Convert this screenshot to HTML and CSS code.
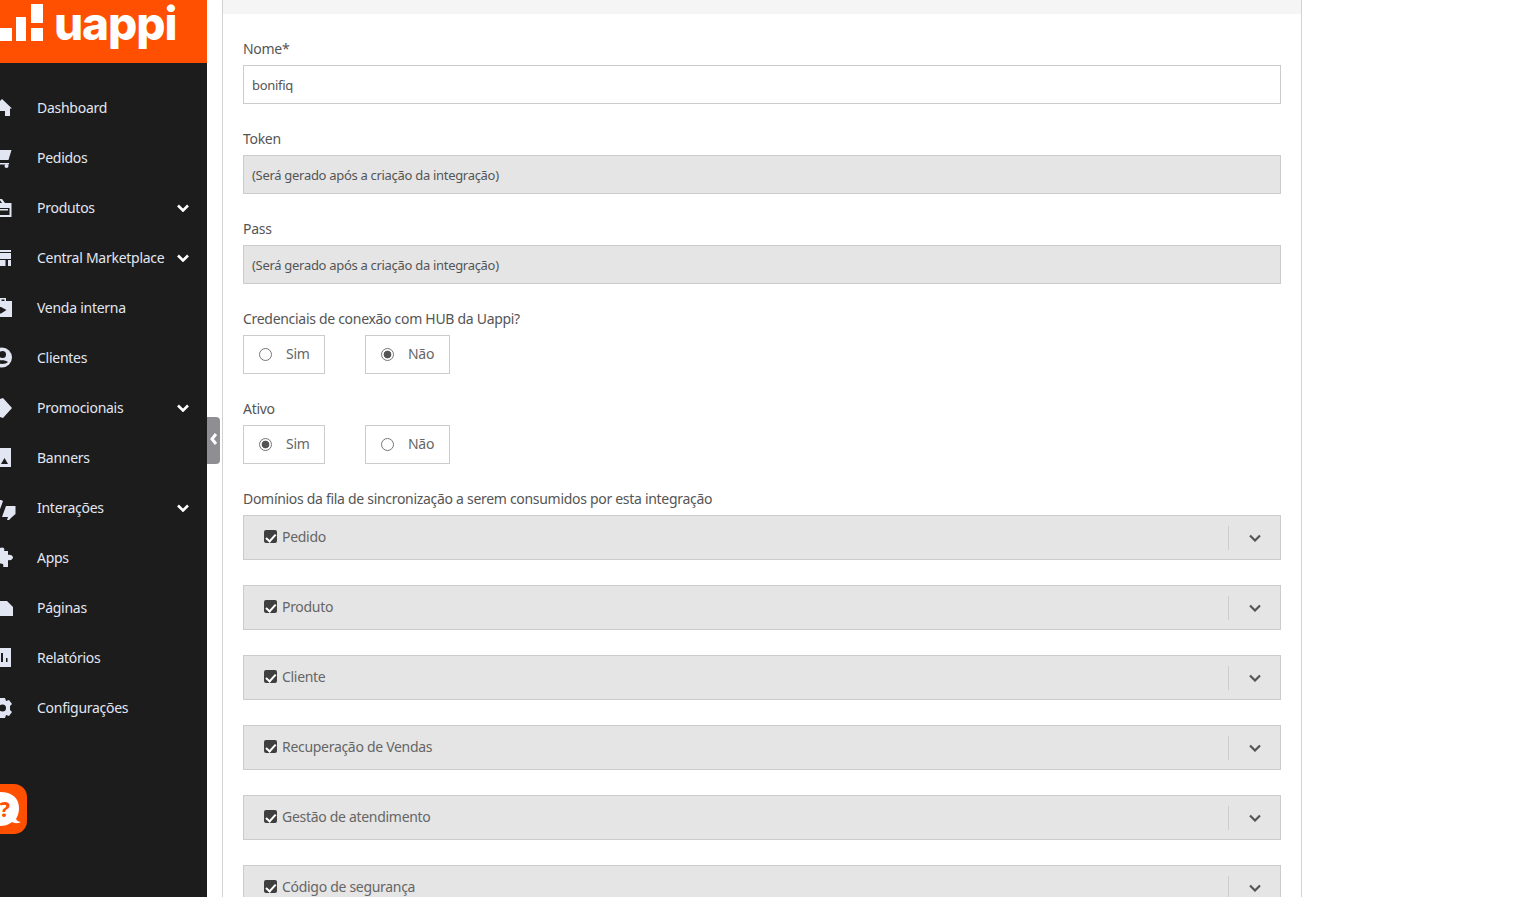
FILE: index.html
```html
<!DOCTYPE html>
<html lang="pt-BR">
<head>
<meta charset="utf-8">
<title>Integração</title>
<link rel="stylesheet" href="styles.css">
</head>
<body>
<div class="app">
  <aside class="sidebar">
    <div class="brand">
      <svg class="brand-mark" viewBox="0 0 44 63" width="44" height="63" aria-hidden="true"><rect x="0" y="28" width="12" height="13"/><rect x="16" y="17" width="10" height="24"/><rect x="31" y="4" width="12" height="19"/><rect x="31" y="28" width="12" height="13"/></svg>
      <span class="brand-name">uappi</span>
    </div>
    <nav class="nav">
      <a class="nav-item"><svg class="nav-icon" viewBox="-8 0 24 24"><path d="M2 3L12 12.500L10 12.500V20H5V15H0V20H-6V12.500H-8Z"/></svg><span class="nav-label">Dashboard</span></a>
      <a class="nav-item"><svg class="nav-icon" viewBox="-8 0 24 24"><path d="M-6 4H11.500L8.500 14H-6Z"/><path d="M-6 17H9V18.500H-6Z"/><circle cx="6.500" cy="20" r="2"/></svg><span class="nav-label">Pedidos</span></a>
      <a class="nav-item has-sub"><svg class="nav-icon" viewBox="-8 0 24 24"><path d="M-6 7H2L-1 3H2L5 7H11.500V21H-6ZM-4 12V19H9.500V12Z" fill-rule="evenodd"/><path d="M-2 13H8V14.500H-2Z"/></svg><span class="nav-label">Produtos</span><svg class="nav-caret" viewBox="0 0 12 8"><path d="M1 1.500L6 6.500L11 1.500"/></svg></a>
      <a class="nav-item has-sub"><svg class="nav-icon" viewBox="-8 0 24 24"><path d="M-6 4H11V6H-6Z"/><path d="M-6 7H11V13H-6Z"/><path d="M-6 14H5.500V20H-6Z"/><path d="M8 14H11V20H8Z"/></svg><span class="nav-label">Central Marketplace</span><svg class="nav-caret" viewBox="0 0 12 8"><path d="M1 1.500L6 6.500L11 1.500"/></svg></a>
      <a class="nav-item"><svg class="nav-icon" viewBox="-8 0 24 24"><path d="M-6 5H0V2H6V5H12V21H-6ZM1.500 5H4.500V3.500H1.500Z" fill-rule="evenodd"/><path class="cut" d="M-2 11H1L6.500 14L1 17.500H-2Z"/></svg><span class="nav-label">Venda interna</span></a>
      <a class="nav-item"><svg class="nav-icon" viewBox="-8 0 24 24"><circle cx="2" cy="11.500" r="10"/><circle class="cut" cx="2.500" cy="8.500" r="3.500"/><path class="cut" d="M-4 16C-1 13.500 5 13.500 8 16C6 18.500 -2 18.500 -4 16Z"/></svg><span class="nav-label">Clientes</span></a>
      <a class="nav-item has-sub"><svg class="nav-icon" viewBox="-8 0 24 24"><path d="M3 2L12 12L3 22L0 21H-8V3H0Z"/></svg><span class="nav-label">Promocionais</span><svg class="nav-caret" viewBox="0 0 12 8"><path d="M1 1.500L6 6.500L11 1.500"/></svg></a>
      <a class="nav-item"><svg class="nav-icon" viewBox="-8 0 24 24"><path d="M-6 2H11V21H-6Z"/><path class="cut" d="M1 18L4.500 12L8 18Z"/></svg><span class="nav-label">Banners</span></a>
      <a class="nav-item has-sub"><svg class="nav-icon" viewBox="-8 0 24 24"><path d="M-1 4H1L3 5L-1 16H-4Z"/><path d="M6 10H15.500V18L12 21L9 24H7L8 21H2Z"/></svg><span class="nav-label">Interações</span><svg class="nav-caret" viewBox="0 0 12 8"><path d="M1 1.500L6 6.500L11 1.500"/></svg></a>
      <a class="nav-item"><svg class="nav-icon" viewBox="-8 0 24 24"><path d="M-6 5H-1C-2 3 0 1.500 2 1.500S5 3 4 5H8V9C10 8 13 9.500 13 11.500S10 15 8 14V21H3C4 19 3 17.500 1 17.500S-3 19 -2 21H-6Z"/></svg><span class="nav-label">Apps</span></a>
      <a class="nav-item"><svg class="nav-icon" viewBox="-8 0 24 24"><path d="M-6 5H7L13 11V20H-6Z"/></svg><span class="nav-label">Páginas</span></a>
      <a class="nav-item"><svg class="nav-icon" viewBox="-8 0 24 24"><path d="M-6 2H11V21H-6Z"/><path class="cut" d="M1 7H3V16H1ZM6 12H7.500V16H6Z"/></svg><span class="nav-label">Relatórios</span></a>
      <a class="nav-item"><svg class="nav-icon" viewBox="-8 0 24 24"><path d="M0 2H5L6 5L9 4L12 8L10 10V14L12 16L9 20L6 19L5 22H0L-1 19L-4 20L-7 16L-5 14V10L-7 8L-4 4L-1 5Z"/><circle class="cut" cx="2.500" cy="12" r="3.500"/></svg><span class="nav-label">Configurações</span></a>
    </nav>
  </aside>
  <button class="collapse" type="button" aria-label="Recolher menu"><svg viewBox="0 0 8 12" width="8" height="12"><path d="M6 1L2 6L6 11"/></svg></button>
  <a class="help" aria-label="Ajuda"><svg viewBox="0 0 27 50" width="27" height="50"><path class="help-bubble" d="M0 8C12 8 19 14 19 24C19 30 17 33 16 35C17 37 19 38 21 38C17 40 14 39 12 38C8 41 4 42 0 42Z"/><text class="help-mark" x="4.500" y="33">?</text></svg></a>
  <main class="content">
    <section class="panel">
      <div class="panel-top"></div>
      <form class="panel-body">
        <div class="field"><label class="label">Nome*</label><input class="input" type="text" value="bonifiq"></div>
        <div class="field"><label class="label">Token</label><input class="input" type="text" disabled value="(Será gerado após a criação da integração)"></div>
        <div class="field"><label class="label">Pass</label><input class="input" type="text" disabled value="(Será gerado após a criação da integração)"></div>
        <div class="field"><span class="label">Credenciais de conexão com HUB da Uappi?</span>
          <div class="radios">
            <label class="radio radio-sim"><input type="radio" name="hub"><span>Sim</span></label>
            <label class="radio radio-nao"><input type="radio" name="hub" checked><span>Não</span></label>
          </div>
        </div>
        <div class="field"><span class="label">Ativo</span>
          <div class="radios">
            <label class="radio radio-sim"><input type="radio" name="ativo" checked><span>Sim</span></label>
            <label class="radio radio-nao"><input type="radio" name="ativo"><span>Não</span></label>
          </div>
        </div>
        <div class="field field-tight"><span class="label">Domínios da fila de sincronização a serem consumidos por esta integração</span></div>
        <div class="acc"><label class="acc-title"><input type="checkbox" checked><span>Pedido</span></label><span class="acc-toggle"><svg viewBox="0 0 12 8" width="12" height="8"><path d="M1 1.500L6 6.500L11 1.500"/></svg></span></div>
        <div class="acc"><label class="acc-title"><input type="checkbox" checked><span>Produto</span></label><span class="acc-toggle"><svg viewBox="0 0 12 8" width="12" height="8"><path d="M1 1.500L6 6.500L11 1.500"/></svg></span></div>
        <div class="acc"><label class="acc-title"><input type="checkbox" checked><span>Cliente</span></label><span class="acc-toggle"><svg viewBox="0 0 12 8" width="12" height="8"><path d="M1 1.500L6 6.500L11 1.500"/></svg></span></div>
        <div class="acc"><label class="acc-title"><input type="checkbox" checked><span>Recuperação de Vendas</span></label><span class="acc-toggle"><svg viewBox="0 0 12 8" width="12" height="8"><path d="M1 1.500L6 6.500L11 1.500"/></svg></span></div>
        <div class="acc"><label class="acc-title"><input type="checkbox" checked><span>Gestão de atendimento</span></label><span class="acc-toggle"><svg viewBox="0 0 12 8" width="12" height="8"><path d="M1 1.500L6 6.500L11 1.500"/></svg></span></div>
        <div class="acc"><label class="acc-title"><input type="checkbox" checked><span>Código de segurança</span></label><span class="acc-toggle"><svg viewBox="0 0 12 8" width="12" height="8"><path d="M1 1.500L6 6.500L11 1.500"/></svg></span></div>
      </form>
    </section>
  </main>
</div>
</body>
</html>
```
FILE: styles.css
```css
* { box-sizing: border-box; }
html, body { margin: 0; height: 100%; overflow: hidden; background: #fff; }
body { font-family: "Noto Sans", "Open Sans", sans-serif; font-size: 14px; color: #555; letter-spacing: -0.3px; }

.app { position: relative; display: flex; height: 897px; overflow: hidden; }

.sidebar { flex: 0 0 207px; width: 207px; background: #1c1c1c; overflow: hidden; }
.brand { height: 63px; background: #ff4f00; display: flex; align-items: flex-start; }
.brand-mark { flex: none; fill: #fff; }
.brand-name { margin-left: 10px; font-family: Inter, sans-serif; font-weight: 800; font-size: 46px; line-height: 47px; letter-spacing: -1.1px; color: #fff; }

.nav { padding-top: 20px; display: flex; flex-direction: column; }
.nav-item { height: 50px; display: flex; align-items: center; color: #e2e6f2; }
.nav-icon { flex: none; width: 24px; height: 24px; margin-left: -8px; margin-right: 21px; fill: #e2e6f2; }
.nav-icon .cut { fill: #1c1c1c; }
.nav-label { flex: 1; white-space: nowrap; padding-bottom: 2px; letter-spacing: -0.27px; }
.nav-caret { flex: none; width: 12px; height: 8px; margin-right: 18px; fill: none; stroke: #fff; stroke-width: 2.600; }

.collapse { position: absolute; left: 207px; top: 417px; width: 13px; height: 47px; padding: 0 0 4px; border: 0; border-radius: 0 4px 4px 0; background: #8f8f93; display: flex; align-items: center; justify-content: center; }
.collapse svg { fill: none; stroke: #fff; stroke-width: 3; }

.help { position: absolute; left: 0; top: 784px; width: 27px; height: 50px; background: #ff4f00; border-radius: 0 13px 13px 0; }
.help svg { display: block; }
.help-bubble { fill: #fff; }
.help-mark { font-family: "Noto Sans", sans-serif; font-weight: 700; font-size: 22px; fill: #ff4f00; text-anchor: middle; }

.content { flex: 1; padding-left: 15px; min-width: 0; }
.panel { width: 1080px; height: 100%; border: 1px solid #d2d2d2; border-width: 0 1px; }
.panel-top { height: 14px; background: #f5f5f5; }
.panel-body { padding: 25px 20px 0; }

.field { margin-bottom: 25px; }
.field-tight { margin-bottom: 6px; }
.label { display: block; height: 20px; line-height: 20px; margin-bottom: 6px; color: #555; }
.field-tight .label { margin-bottom: 0; }

.input { display: block; width: 100%; height: 39px; padding: 0 8px; border: 1px solid #ccc; background: #fff; font: inherit; font-size: 13px; letter-spacing: -0.3px; color: #555; border-radius: 0; }
.input:disabled { background: #e5e5e5; color: #555; opacity: 1; }

.radios { display: flex; gap: 40px; }
.radio { height: 39px; display: flex; align-items: center; border: 1px solid #ccc; padding-left: 15px; gap: 14px; color: #666; }
.radio span { padding-bottom: 2px; }
.radio-sim { width: 82px; }
.radio-nao { width: 85px; }
.radio input { appearance: none; margin: 0; width: 13px; height: 13px; border: 1px solid #767676; border-radius: 50%; background: #fff; }
.radio input:checked { background: radial-gradient(circle, #555 0 3.5px, #fff 4.200px); }

.acc { height: 45px; margin-bottom: 25px; background: #e5e5e5; border: 1px solid #ccc; display: flex; align-items: center; justify-content: space-between; }
.acc-title { display: flex; align-items: center; padding-left: 20px; gap: 5px; color: #666; }
.acc-title span { padding-bottom: 2px; }
.acc-title input { appearance: none; position: relative; margin: 0 0 2px; width: 13px; height: 13px; border-radius: 2px; background: #3f3f3f; }
.acc-title input::after { content: ""; position: absolute; left: 4px; top: 1.500px; width: 4px; height: 7.500px; border: solid #fff; border-width: 0 2px 2px 0; transform: rotate(42deg); }
.acc-toggle { width: 52px; height: 24px; border-left: 1px solid #ccc; display: flex; align-items: center; justify-content: center; }
.acc-toggle svg { fill: none; stroke: #555; stroke-width: 2.200; }
```
